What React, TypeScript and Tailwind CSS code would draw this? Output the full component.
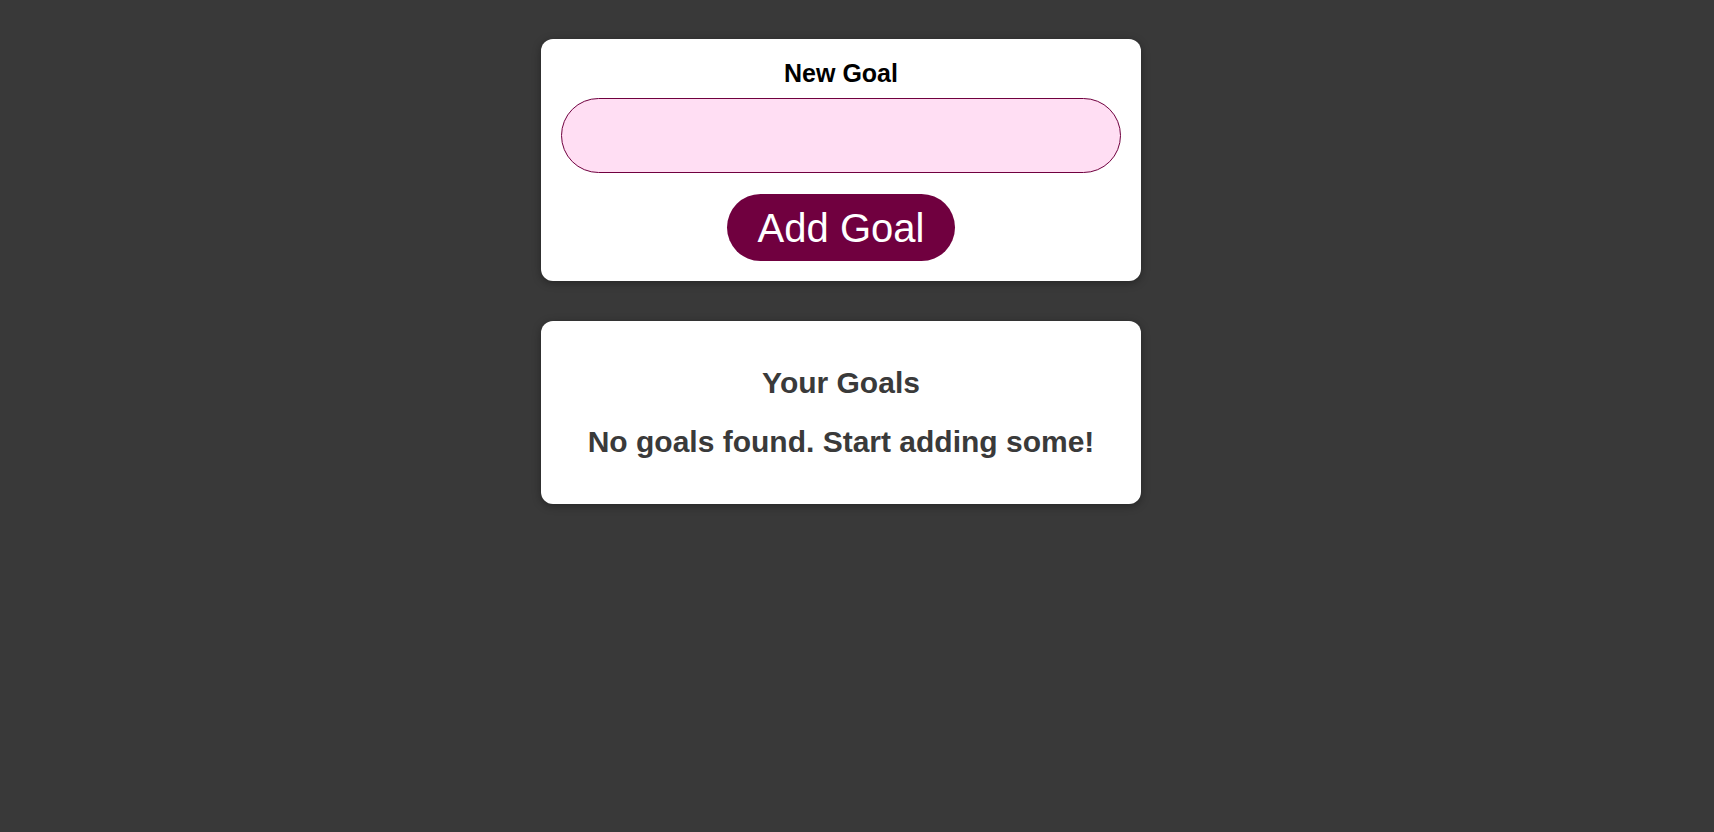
import React from "react";

export default function App() {
  return (
    <div
      className="min-h-[832px] w-full bg-[#393939] pt-[39px]"
      style={{ fontFamily: '"Liberation Sans", Arial, sans-serif' }}
    >
      <div className="ml-[541px] flex w-[600px] flex-col gap-[40px]">
        <div className="flex flex-col items-center rounded-[12px] bg-white px-5 pb-5 pt-[20px] shadow-[0_2px_8px_rgba(0,0,0,0.35)]">
          <label className="mb-[11px] text-[25px] font-bold leading-[28px] text-black">
            New Goal
          </label>
          <input
            type="text"
            className="h-[75px] w-full rounded-full border border-[#70003f] bg-[#ffdef3] px-6 text-[20px] outline-none"
          />
          <button className="mt-[21px] h-[67px] rounded-full bg-[#70003f] px-[31px] text-[40px] leading-[46px] text-white">
            Add Goal
          </button>
        </div>
        <div className="flex flex-col items-center rounded-[12px] bg-white px-5 pb-[45px] pt-[45px] text-[#3a3a3a] shadow-[0_2px_8px_rgba(0,0,0,0.35)]">
          <h2 className="text-[30px] font-bold leading-[34px]">Your Goals</h2>
          <p className="mt-[25px] text-[30px] font-bold leading-[34px]">
            No goals found. Start adding some!
          </p>
        </div>
      </div>
    </div>
  );
}
